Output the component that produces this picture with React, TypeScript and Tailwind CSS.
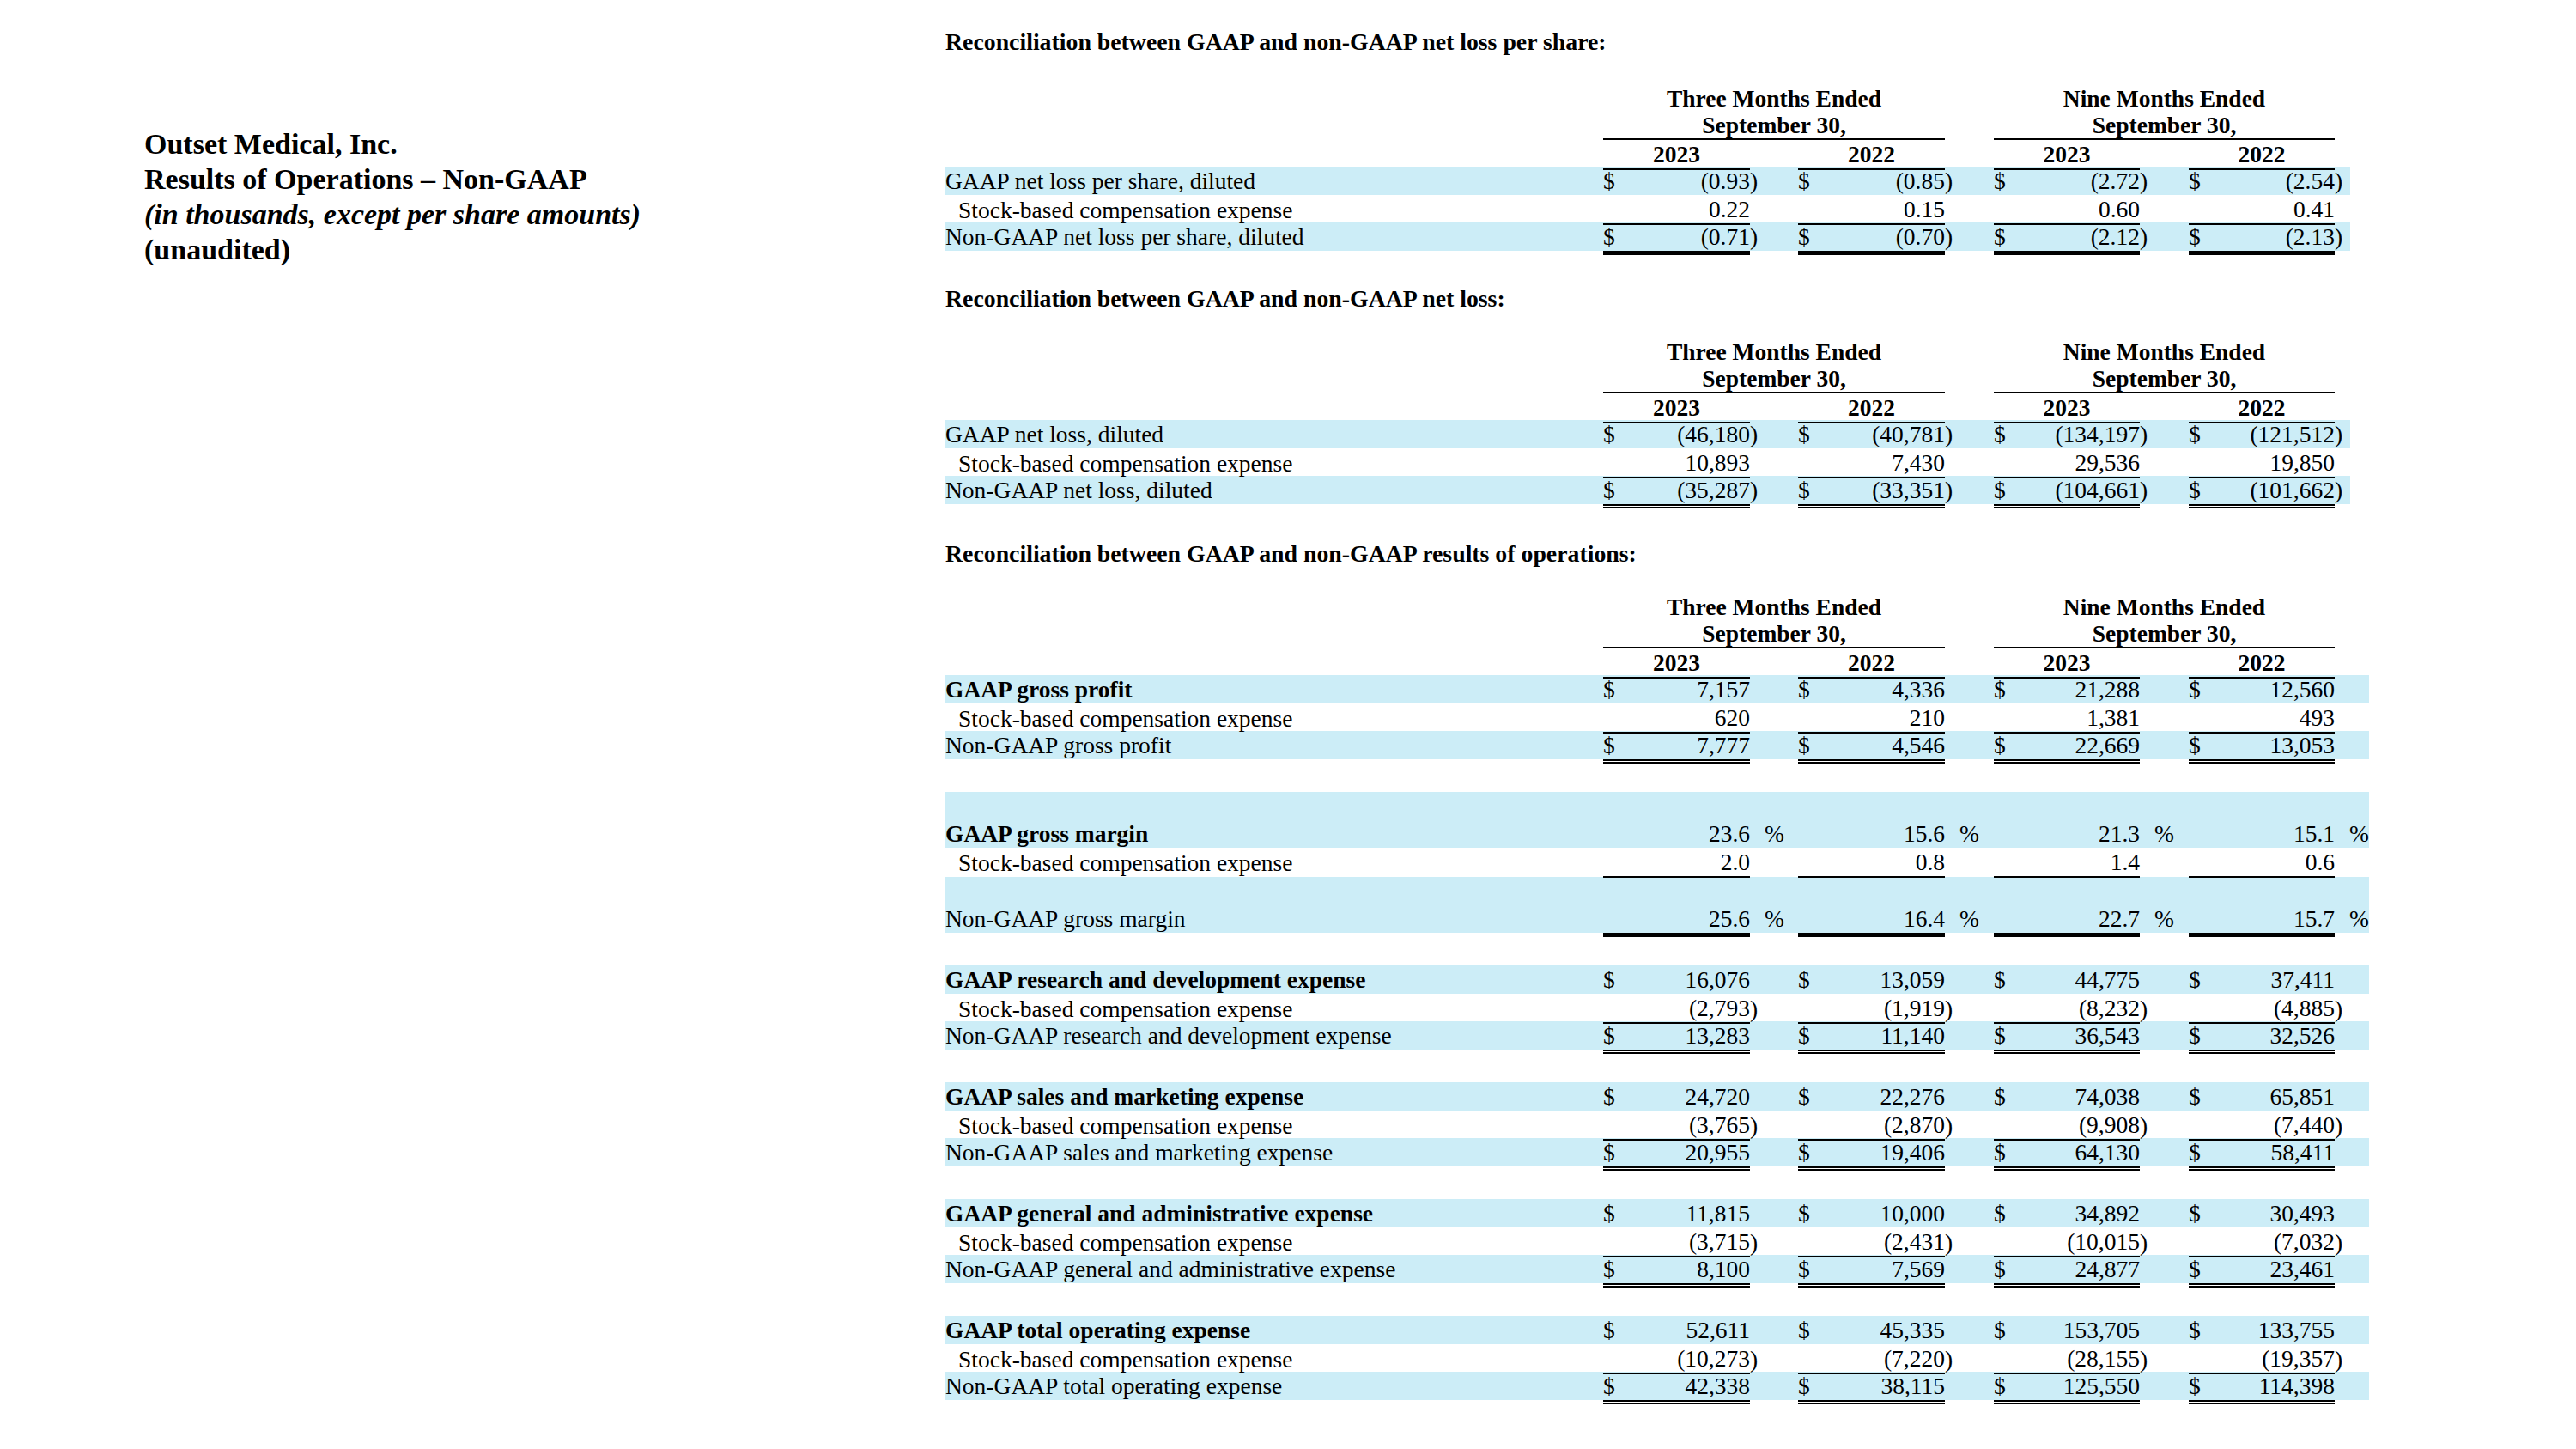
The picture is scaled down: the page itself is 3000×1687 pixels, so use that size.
import clsx from "clsx";

type Line = {
  label: string;
  vals: string[];
  bold?: boolean;
  indent?: boolean;
  dollar?: boolean;
  pct?: boolean;
};

type Block = { lines: Line[]; tall?: boolean };

const SBC = "Stock-based compensation expense";

const perShare: Block[] = [
  {
    lines: [
      { label: "GAAP net loss per share, diluted", dollar: true, vals: ["(0.93)", "(0.85)", "(2.72)", "(2.54)"] },
      { label: SBC, indent: true, vals: ["0.22", "0.15", "0.60", "0.41"] },
      { label: "Non-GAAP net loss per share, diluted", dollar: true, vals: ["(0.71)", "(0.70)", "(2.12)", "(2.13)"] },
    ],
  },
];

const netLoss: Block[] = [
  {
    lines: [
      { label: "GAAP net loss, diluted", dollar: true, vals: ["(46,180)", "(40,781)", "(134,197)", "(121,512)"] },
      { label: SBC, indent: true, vals: ["10,893", "7,430", "29,536", "19,850"] },
      { label: "Non-GAAP net loss, diluted", dollar: true, vals: ["(35,287)", "(33,351)", "(104,661)", "(101,662)"] },
    ],
  },
];

const results: Block[] = [
  {
    lines: [
      { label: "GAAP gross profit", bold: true, dollar: true, vals: ["7,157", "4,336", "21,288", "12,560"] },
      { label: SBC, indent: true, vals: ["620", "210", "1,381", "493"] },
      { label: "Non-GAAP gross profit", dollar: true, vals: ["7,777", "4,546", "22,669", "13,053"] },
    ],
  },
  {
    tall: true,
    lines: [
      { label: "GAAP gross margin", bold: true, pct: true, vals: ["23.6", "15.6", "21.3", "15.1"] },
      { label: SBC, indent: true, vals: ["2.0", "0.8", "1.4", "0.6"] },
      { label: "Non-GAAP gross margin", pct: true, vals: ["25.6", "16.4", "22.7", "15.7"] },
    ],
  },
  {
    lines: [
      { label: "GAAP research and development expense", bold: true, dollar: true, vals: ["16,076", "13,059", "44,775", "37,411"] },
      { label: SBC, indent: true, vals: ["(2,793)", "(1,919)", "(8,232)", "(4,885)"] },
      { label: "Non-GAAP research and development expense", dollar: true, vals: ["13,283", "11,140", "36,543", "32,526"] },
    ],
  },
  {
    lines: [
      { label: "GAAP sales and marketing expense", bold: true, dollar: true, vals: ["24,720", "22,276", "74,038", "65,851"] },
      { label: SBC, indent: true, vals: ["(3,765)", "(2,870)", "(9,908)", "(7,440)"] },
      { label: "Non-GAAP sales and marketing expense", dollar: true, vals: ["20,955", "19,406", "64,130", "58,411"] },
    ],
  },
  {
    lines: [
      { label: "GAAP general and administrative expense", bold: true, dollar: true, vals: ["11,815", "10,000", "34,892", "30,493"] },
      { label: SBC, indent: true, vals: ["(3,715)", "(2,431)", "(10,015)", "(7,032)"] },
      { label: "Non-GAAP general and administrative expense", dollar: true, vals: ["8,100", "7,569", "24,877", "23,461"] },
    ],
  },
  {
    lines: [
      { label: "GAAP total operating expense", bold: true, dollar: true, vals: ["52,611", "45,335", "153,705", "133,755"] },
      { label: SBC, indent: true, vals: ["(10,273)", "(7,220)", "(28,155)", "(19,357)"] },
      { label: "Non-GAAP total operating expense", dollar: true, vals: ["42,338", "38,115", "125,550", "114,398"] },
    ],
  },
];

// column widths measured off the filing: label | (value, suffix) x4
const NARROW = "grid w-max grid-cols-[766px_171px_56px_171px_57px_170px_57px_170px_18px]";
const WIDE = "grid w-max grid-cols-[766px_171px_56px_171px_57px_170px_57px_170px_40px]";

function ValueCells({ line, underline }: { line: Line; underline?: boolean }) {
  return (
    <>
      {line.vals.map((v, i) => {
        const neg = v.startsWith("(");
        const num = neg ? v.slice(0, -1) : v;
        return (
          <div key={i} className="contents">
            <div className={clsx("flex items-center justify-between", underline && "border-b-2 border-black")}>
              <span>{line.dollar ? "$" : ""}</span>
              <span>{num}</span>
            </div>
            <div className="flex items-center">
              {neg && <span>)</span>}
              {line.pct && <span className="pl-[17px]">%</span>}
            </div>
          </div>
        );
      })}
    </>
  );
}

function Row({
  line,
  cols,
  blue,
  tall,
  underline,
}: {
  line: Line;
  cols: string;
  blue?: boolean;
  tall?: boolean;
  underline?: boolean;
}) {
  let h = "h-[33px]";
  if (tall) h = blue ? "h-[65px] pt-[32px]" : "h-[34px]";
  else if (underline) h = "h-[32px]";
  return (
    <div className={clsx(cols, h, blue && "bg-[#ccedf7]")}>
      <div className={clsx("flex items-center whitespace-nowrap", line.bold && "font-bold", line.indent && "pl-[15px]")}>
        {line.label}
      </div>
      <ValueCells line={line} underline={underline} />
    </div>
  );
}

function DoubleRule({ cols }: { cols: string }) {
  return (
    <div className={cols}>
      <div />
      {[0, 1, 2, 3].map((i) => (
        <div key={i} className="contents">
          <div className="h-[5px] border-y-2 border-black" />
          <div />
        </div>
      ))}
    </div>
  );
}

function Header({ cols }: { cols: string }) {
  return (
    <div className="font-bold">
      <div className={clsx(cols, "leading-[31px] text-center")}>
        <div />
        <div className="col-span-3 border-b-2 border-black">
          Three Months Ended
          <br />
          September 30,
        </div>
        <div />
        <div className="col-span-3 border-b-2 border-black">
          Nine Months Ended
          <br />
          September 30,
        </div>
        <div />
      </div>
      <div className={clsx(cols, "h-[31px] text-center")}>
        <div />
        {["2023", "2022", "2023", "2022"].map((y, i) => (
          <div key={i} className="contents">
            <div className="flex items-center justify-center border-b-2 border-black">{y}</div>
            <div />
          </div>
        ))}
      </div>
    </div>
  );
}

function Table({
  title,
  blocks,
  wide,
  className,
  gap = "mt-[30px]",
}: {
  title: string;
  blocks: Block[];
  wide?: boolean;
  className?: string;
  gap?: string;
}) {
  const cols = wide ? WIDE : NARROW;
  return (
    <section className={className}>
      <h2 className="font-bold text-[27.8px] leading-[33px] whitespace-nowrap">{title}</h2>
      <div className={gap}>
        <Header cols={cols} />
        {blocks.map((b, bi) => (
          <div key={bi} className={clsx(bi > 0 && "mt-[33px]")}>
            <Row line={b.lines[0]} cols={cols} blue tall={b.tall} />
            <Row line={b.lines[1]} cols={cols} underline tall={b.tall} />
            <Row line={b.lines[2]} cols={cols} blue tall={b.tall} />
            <DoubleRule cols={cols} />
          </div>
        ))}
      </div>
    </section>
  );
}

export default function App() {
  return (
    <div className="flex w-[3000px] h-[1687px] bg-white text-black font-['Liberation_Serif',serif] overflow-hidden">
      <div className="w-[1101px] shrink-0 pl-[168px] pt-[147px] text-[34px] leading-[41px] font-bold">
        <p>Outset Medical, Inc.</p>
        <p>Results of Operations – Non-GAAP</p>
        <p className="italic">(in thousands, except per share amounts)</p>
        <p>(unaudited)</p>
      </div>
      <div className="pt-[32px] text-[27.5px] leading-[33px]">
        <Table
          title="Reconciliation between GAAP and non-GAAP net loss per share:"
          blocks={perShare}
          gap="mt-[34px]"
        />
        <Table title="Reconciliation between GAAP and non-GAAP net loss:" blocks={netLoss} className="mt-[34px]" />
        <Table
          title="Reconciliation between GAAP and non-GAAP results of operations:"
          blocks={results}
          wide
          className="mt-[36px]"
        />
      </div>
    </div>
  );
}
